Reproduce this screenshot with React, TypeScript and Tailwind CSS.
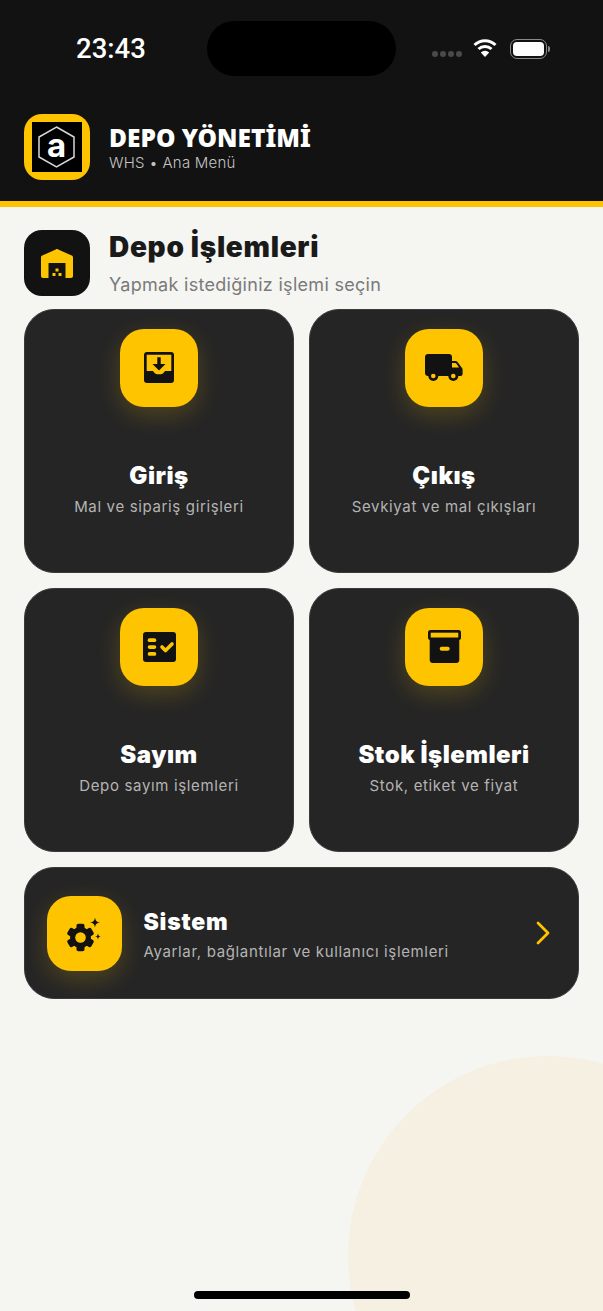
import type { ReactNode } from "react";

function InboxIcon() {
  return (
    <svg width="30" height="31" viewBox="0 0 30 31">
      <rect width="30" height="31" rx="3" fill="#121212" />
      <path d="M2.700 2.700h24.600V19h-5.500c-1 0-1.500 .6-2 1.500-.6 1-1.800 1.800-4.800 1.800s-4.200-.8-4.800-1.800c-.5-.9-1-1.500-2-1.500H2.700z" fill="#ffc400" />
      <path d="M13.300 5.300h3.400V12h4.800L15 18.500 8.500 12h4.800z" fill="#121212" />
    </svg>
  );
}

function TruckIcon() {
  return (
    <svg width="38" height="28" viewBox="0 0 38 28">
      <path d="M3 0h21c1.700 0 3 1.300 3 3v19H3c-1.700 0-3-1.300-3-3V3c0-1.700 1.300-3 3-3z" fill="#121212" />
      <path d="M27 7h3.500c.8 0 1.500 .4 2 1l4.500 6c.4 .5 .6 1.100 .6 1.700V20c0 1.100-.9 2-2 2H27z" fill="#121212" />
      <path d="M27 9h3.300c.4 0 .7 .2 1 .5L34 13.500h-7z" fill="#ffc400" />
      <circle cx="8.300" cy="22" r="5" fill="#121212" />
      <circle cx="8.300" cy="22" r="2.300" fill="#ffc400" />
      <circle cx="28.300" cy="22" r="5" fill="#121212" />
      <circle cx="28.300" cy="22" r="2.300" fill="#ffc400" />
    </svg>
  );
}

function ChecklistIcon() {
  return (
    <svg width="33" height="30" viewBox="0 0 33 30">
      <rect width="33" height="30" rx="3" fill="#121212" />
      <rect x="4.700" y="6.300" width="8.600" height="3.800" rx="1.900" fill="#ffc400" />
      <rect x="4.700" y="13.300" width="8.600" height="3.600" rx="1.800" fill="#ffc400" />
      <rect x="4.700" y="20" width="8.600" height="3.800" rx="1.900" fill="#ffc400" />
      <path d="M19 15l3.500 3.500 6.500-6.500" fill="none" stroke="#ffc400" strokeWidth="3.600" strokeLinecap="round" strokeLinejoin="round" />
    </svg>
  );
}

function ArchiveIcon() {
  return (
    <svg width="33" height="33" viewBox="0 0 33 33">
      <rect width="33" height="10" rx="2.500" fill="#121212" />
      <rect x="2.700" y="2.700" width="27.600" height="4.800" fill="#ffc400" />
      <path d="M1.700 9h29.600v21c0 1.700-1.300 3-3 3H4.700c-1.700 0-3-1.300-3-3z" fill="#121212" />
      <rect x="11.700" y="16.700" width="10" height="4" rx="2" fill="#ffc400" />
    </svg>
  );
}

function GearIcon() {
  const teeth = [0, 60, 120, 180, 240, 300];
  return (
    <svg width="37" height="39" viewBox="0 0 37 39">
      <g transform="translate(14.500 23.500)">
        <circle r="10.500" fill="#121212" />
        {teeth.map((angle) => (
          <rect key={angle} x="-4" y="-13.800" width="8" height="8" rx="1.800" transform={`rotate(${angle})`} fill="#121212" />
        ))}
        <circle r="5.300" fill="#ffc400" />
      </g>
      <path d="M29 3.500c.7 3.600 1.400 4.300 5 5-3.600 .7-4.300 1.400-5 5-.7-3.600-1.400-4.300-5-5 3.600-.7 4.300-1.400 5-5z" fill="#121212" />
      <path d="M32 19.500c.4 2.200 .8 2.600 3 3-2.200 .4-2.600 .8-3 3-.4-2.200-.8-2.600-3-3 2.200-.4 2.600-.8 3-3z" fill="#121212" />
    </svg>
  );
}

function WarehouseIcon() {
  return (
    <svg width="32" height="29" viewBox="0 0 32 29">
      <path d="M0 8.500c0-.9 .5-1.600 1.300-2L14.800 .4c.8-.4 1.600-.4 2.400 0l13.500 6.100c.8 .4 1.300 1.100 1.300 2V27c0 1.100-.9 2-2 2h-5.500V14H7.500v15H2c-1.100 0-2-.9-2-2z" fill="#ffc400" />
      <rect x="14.500" y="19.500" width="3" height="3" fill="#ffc400" />
      <rect x="11.500" y="24" width="3" height="3" fill="#ffc400" />
      <rect x="17.500" y="24" width="3" height="3" fill="#ffc400" />
    </svg>
  );
}

function YellowTile({ children, large }: { children: ReactNode; large?: boolean }) {
  return (
    <div
      className={
        large
          ? "flex h-[75px] w-[75px] shrink-0 items-center justify-center rounded-[24px] bg-[#ffc400] shadow-[0_8px_24px_rgba(255,196,0,0.2)]"
          : "flex h-[78px] w-[78px] shrink-0 items-center justify-center rounded-[24px] bg-[#ffc400] shadow-[0_8px_24px_rgba(255,196,0,0.2)]"
      }
    >
      {children}
    </div>
  );
}

function MenuCard({ icon, title, subtitle }: { icon: ReactNode; title: string; subtitle: string }) {
  return (
    <div className="flex h-[264px] flex-col items-center rounded-[30px] border-[1.500px] border-[#3a3a3a] bg-[#252525] pt-[18.500px]">
      <YellowTile>{icon}</YellowTile>
      <div className="mt-[55px] text-[24px] leading-[28px] font-black tracking-[0.5px] text-white">{title}</div>
      <div className="mt-[7px] text-[15px] leading-[20px] tracking-[0.65px] text-[#b4b4b4]">{subtitle}</div>
    </div>
  );
}

export default function App() {
  return (
    <div className="relative h-[1311px] w-[603px] overflow-hidden bg-[#f5f5f2] font-['Inter',sans-serif]">
      {/* soft circle bottom right */}
      <div className="absolute top-[1056px] left-[348px] h-[400px] w-[400px] rounded-full bg-[#f6f0e3]" />

      <header className="relative h-[207px] border-b-[6px] border-[#ffc400] bg-[#121212]">
        <div className="flex h-[98px] items-start justify-between pt-[21px] pr-[53px] pl-[76px]">
          <div className="mt-[11px] font-['Roboto',sans-serif] text-[27.500px] leading-[34px] font-medium text-white">23:43</div>
          <div className="absolute top-[21px] left-[207px] h-[55px] w-[189px] rounded-full bg-black" />
          <div className="mt-[18px] flex items-center gap-[11px]">
            <div className="mt-[10px] flex gap-[2px]">
              <span className="h-[6px] w-[6px] rounded-full bg-[#4a4a4a]" />
              <span className="h-[6px] w-[6px] rounded-full bg-[#4a4a4a]" />
              <span className="h-[6px] w-[6px] rounded-full bg-[#4a4a4a]" />
              <span className="h-[6px] w-[6px] rounded-full bg-[#4a4a4a]" />
            </div>
            <svg width="24" height="20" viewBox="0 0 24 20" className="-mt-[2px]">
              <path d="M1.500 7a15 15 0 0 1 21 0M5.500 11a9.500 9.500 0 0 1 13 0" fill="none" stroke="#fff" strokeWidth="3" />
              <path d="M12 19l-4.200-4.500a6 6 0 0 1 8.400 0z" fill="#fff" />
            </svg>
            <div className="ml-[2px] flex items-center">
              <div className="h-[20px] w-[37px] rounded-[7px] border-[1.500px] border-[#8a8a8a] p-[2px]">
                <div className="h-full w-full rounded-[4px] bg-white" />
              </div>
              <div className="ml-[1px] h-[6px] w-[2px] rounded-r-full bg-[#8a8a8a]" />
            </div>
          </div>
        </div>

        <div className="mt-[16px] flex items-center gap-[19px] pl-[24px]">
          <div className="flex h-[66px] w-[66px] items-center justify-center rounded-[18px] bg-[#ffc400]">
            <div className="h-[50px] w-[50px] bg-black">
              <svg width="50" height="50" viewBox="0 0 50 50">
                <path d="M24.500 5L42 15v20L24.500 45 7 35V15z" fill="none" stroke="#d8d8d8" strokeWidth="1.500" />
                <text x="24.500" y="34.500" textAnchor="middle" fontFamily="Inter, sans-serif" fontWeight="700" fontSize="33" fill="#fff">a</text>
              </svg>
            </div>
          </div>
          <div className="mt-[2px]">
            <div className="font-['Noto_Sans',sans-serif] text-[24.500px] leading-[27px] font-black text-white">DEPO YÖNETİMİ</div>
            <div className="mt-[2px] text-[15px] leading-[20px] font-light tracking-[0.25px] text-[#c4c4c4]">WHS • Ana Menü</div>
          </div>
        </div>
      </header>

      <main className="relative px-[24px]">
        <div className="flex items-start gap-[19px] pt-[23px]">
          <div className="flex h-[66px] w-[66px] items-center justify-center rounded-[18px] bg-[#121212]">
            <WarehouseIcon />
          </div>
          <div>
            <div className="mt-[-1px] text-[28px] leading-[36px] font-black tracking-[0.7px] text-[#1a1a1a]">Depo İşlemleri</div>
            <div className="mt-[8px] text-[18px] leading-[24px] tracking-[0.3px] text-[#7a7a7a]">Yapmak istediğiniz işlemi seçin</div>
          </div>
        </div>

        <div className="mt-[12px] grid grid-cols-2 gap-[15px]">
          <MenuCard icon={<InboxIcon />} title="Giriş" subtitle="Mal ve sipariş girişleri" />
          <MenuCard icon={<TruckIcon />} title="Çıkış" subtitle="Sevkiyat ve mal çıkışları" />
          <MenuCard icon={<ChecklistIcon />} title="Sayım" subtitle="Depo sayım işlemleri" />
          <MenuCard icon={<ArchiveIcon />} title="Stok İşlemleri" subtitle="Stok, etiket ve fiyat" />
        </div>

        <div className="mt-[15px] flex h-[132px] items-center rounded-[30px] border-[1.500px] border-[#3a3a3a] bg-[#252525] pr-[26px] pl-[21.500px]">
          <YellowTile large>
            <GearIcon />
          </YellowTile>
          <div className="ml-[22px] flex-1">
            <div className="mt-[3px] text-[23px] leading-[28px] font-black tracking-[0.8px] text-white">Sistem</div>
            <div className="mt-[6px] text-[15px] leading-[20px] tracking-[0.65px] text-[#b4b4b4]">Ayarlar, bağlantılar ve kullanıcı işlemleri</div>
          </div>
          <svg width="18" height="26" viewBox="0 0 18 26">
            <path d="M4 3l10 10L4 23" fill="none" stroke="#ffc400" strokeWidth="2.800" strokeLinecap="round" strokeLinejoin="round" />
          </svg>
        </div>
      </main>

      {/* home indicator */}
      <div className="absolute bottom-[12px] left-[194px] h-[8px] w-[216px] rounded-full bg-black" />
    </div>
  );
}
